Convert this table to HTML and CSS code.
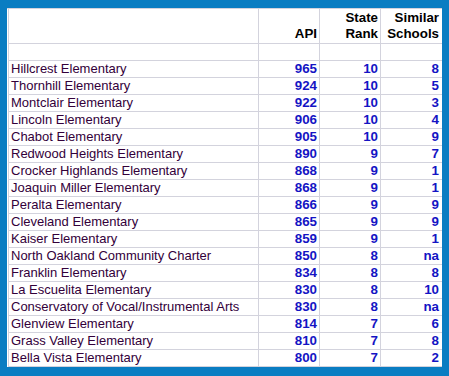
FILE: index.html
```html
<!DOCTYPE html>
<html>
<head>
<meta charset="utf-8">
<link rel="stylesheet" href="styles.css">
</head>
<body>
<div class="frame">
  <div class="sheet">
    <div class="row head">
      <div class="cell name"></div>
      <div class="cell num">API</div>
      <div class="cell num">State<br>Rank</div>
      <div class="cell num last">Similar<br>Schools</div>
    </div>
    <div class="row">
      <div class="cell name"></div>
      <div class="cell num"></div>
      <div class="cell num"></div>
      <div class="cell num last"></div>
    </div>
    <div class="row"><div class="cell name">Hillcrest Elementary</div><div class="cell num">965</div><div class="cell num">10</div><div class="cell num last">8</div></div>
    <div class="row"><div class="cell name">Thornhill Elementary</div><div class="cell num">924</div><div class="cell num">10</div><div class="cell num last">5</div></div>
    <div class="row"><div class="cell name">Montclair Elementary</div><div class="cell num">922</div><div class="cell num">10</div><div class="cell num last">3</div></div>
    <div class="row"><div class="cell name">Lincoln Elementary</div><div class="cell num">906</div><div class="cell num">10</div><div class="cell num last">4</div></div>
    <div class="row"><div class="cell name">Chabot Elementary</div><div class="cell num">905</div><div class="cell num">10</div><div class="cell num last">9</div></div>
    <div class="row"><div class="cell name">Redwood Heights Elementary</div><div class="cell num">890</div><div class="cell num">9</div><div class="cell num last">7</div></div>
    <div class="row"><div class="cell name">Crocker Highlands Elementary</div><div class="cell num">868</div><div class="cell num">9</div><div class="cell num last">1</div></div>
    <div class="row"><div class="cell name">Joaquin Miller Elementary</div><div class="cell num">868</div><div class="cell num">9</div><div class="cell num last">1</div></div>
    <div class="row"><div class="cell name">Peralta Elementary</div><div class="cell num">866</div><div class="cell num">9</div><div class="cell num last">9</div></div>
    <div class="row"><div class="cell name">Cleveland Elementary</div><div class="cell num">865</div><div class="cell num">9</div><div class="cell num last">9</div></div>
    <div class="row"><div class="cell name">Kaiser Elementary</div><div class="cell num">859</div><div class="cell num">9</div><div class="cell num last">1</div></div>
    <div class="row"><div class="cell name">North Oakland Community Charter</div><div class="cell num">850</div><div class="cell num">8</div><div class="cell num last">na</div></div>
    <div class="row"><div class="cell name">Franklin Elementary</div><div class="cell num">834</div><div class="cell num">8</div><div class="cell num last">8</div></div>
    <div class="row"><div class="cell name">La Escuelita Elementary</div><div class="cell num">830</div><div class="cell num">8</div><div class="cell num last">10</div></div>
    <div class="row"><div class="cell name">Conservatory of Vocal/Instrumental Arts</div><div class="cell num">830</div><div class="cell num">8</div><div class="cell num last">na</div></div>
    <div class="row"><div class="cell name">Glenview Elementary</div><div class="cell num">814</div><div class="cell num">7</div><div class="cell num last">6</div></div>
    <div class="row"><div class="cell name">Grass Valley Elementary</div><div class="cell num">810</div><div class="cell num">7</div><div class="cell num last">8</div></div>
    <div class="row"><div class="cell name">Bella Vista Elementary</div><div class="cell num">800</div><div class="cell num">7</div><div class="cell num last">2</div></div>
  </div>
</div>
</body>
</html>
```
FILE: styles.css
```css
html, body {
  margin: 0;
  padding: 0;
}
body {
  background: #0a7dc2;
  width: 449px;
  height: 376px;
  overflow: hidden;
  font-family: "Liberation Sans", Arial, sans-serif;
  font-size: 13.33px;
}
.frame {
  padding: 8px 7px 9px 7px;
}
.sheet {
  background: #ffffff;
  width: 435px;
  height: 359px;
  box-sizing: border-box;
  padding-left: 1px;
  border-top: 1px solid #d3d3dd;
  overflow: hidden;
}
.row {
  display: grid;
  grid-template-columns: 251px 61px 61px 61px;
  height: 17px;
  box-sizing: border-box;
  border-bottom: 1px solid #d3d3dd;
}
.row.head {
  height: 35px;
}
.cell {
  box-sizing: border-box;
  border-right: 1px solid #d3d3dd;
  line-height: 16px;
  white-space: nowrap;
  overflow: hidden;
}
.cell.name {
  border-left: 1px solid #d3d3dd;
  padding-left: 2px;
  font-size: 13px;
  color: #33003a;
}
.cell.num {
  text-align: right;
  padding-right: 2px;
  font-weight: bold;
  color: #1414c4;
}
.cell.last {
  border-right: none;
  padding-right: 3px;
}
.head .cell {
  display: flex;
  flex-direction: column;
  justify-content: flex-end;
  align-items: flex-end;
  color: #000000;
  padding-bottom: 1px;
}
.head .cell.name {
  align-items: flex-start;
}
```
